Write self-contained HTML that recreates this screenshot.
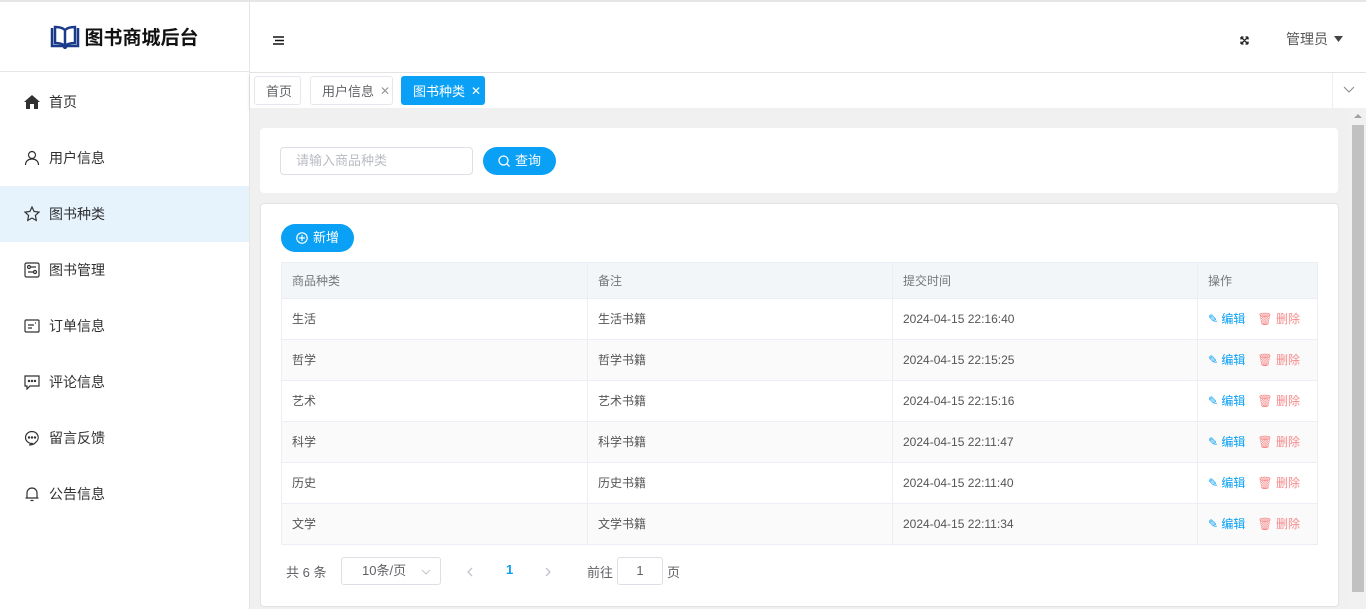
<!DOCTYPE html>
<html><head><meta charset="utf-8"><style>
*{box-sizing:border-box;margin:0;padding:0}
body{width:1366px;height:609px;overflow:hidden;background:#fff;font-family:"Liberation Sans","Noto Sans CJK SC",sans-serif;font-size:13px;color:#333;position:relative}
.a{position:absolute;white-space:nowrap}
.topline{left:0;top:0;width:1366px;height:2px;background:#e6e6e6}
.side{left:0;top:2px;width:250px;height:607px;border-right:1px solid #e6e6e6;background:#fff}
.logo{left:0;top:2px;width:249px;height:70px;border-bottom:1px solid #e6e6e6;display:flex;align-items:center;justify-content:center;font-size:19px;font-weight:bold;color:#111}
.menu{left:0;width:249px;height:56px;display:flex;align-items:center;padding-left:24px;font-size:14px;color:#303133}
.menu svg{margin-right:9px}
.menu.on{background:#e6f3fd}
.header{left:250px;top:2px;width:1116px;height:71px;border-bottom:1px solid #e6e6e6}
.tabs{left:250px;top:73px;width:1116px;height:35px;background:#fff;box-shadow:0 2px 4px rgba(0,0,0,.12)}
.tab{top:76px;height:29px;border:1px solid #e4e7ed;border-radius:3px;font-size:13px;color:#606266;display:flex;align-items:center;padding:0 11px;background:#fff}
.tab.on{background:#0aa0f5;color:#fff;border-color:#0aa0f5}
.tab span{font-size:12px;margin-left:6px}
.main{left:250px;top:108px;width:1100px;height:501px;background:#f0f0f0}
.card{background:#fff;border-radius:4px}
.btn{background:#0aa0f5;color:#fff;border-radius:14px;height:28px;display:flex;align-items:center;justify-content:center;font-size:13px;line-height:28px}
table{border-collapse:collapse;position:absolute;left:281px;top:262px;width:1037px;font-size:12px;color:#555}
td,th{border:1px solid #ebeef5;height:41px;padding:0 0 0 10px;text-align:left;font-weight:normal;line-height:16px}
th{height:36px;background:#f3f6f9;color:#777}
tr:nth-child(odd) td{background:#fafafa}
.ed{color:#0aa0f5}.dl{color:#f78989;margin-left:12px}
.ed svg,.dl svg{vertical-align:-2px;margin-right:4px}
</style></head><body>
<div class="a topline"></div>
<div class="a side"></div>
<div class="a logo"><svg width="30" height="24" viewBox="0 0 30 24" style="margin-right:4px"><path d="M2 3v18h11l2 2 2-2h11V3" fill="none" stroke="#1a3a8a" stroke-width="2.5"/><path d="M5 2c4 0 8 1 10 3v16c-2-2-6-3-10-3zM25 2c-4 0-8 1-10 3v16c2-2 6-3 10-3z" fill="none" stroke="#1a3a8a" stroke-width="2.5"/></svg>图书商城后台</div>
<div class="a menu" style="top:74px"><svg width="16" height="14" viewBox="0 0 16 14"><path d="M8 0L0 7h2v7h4V9h4v5h4V7h2z" fill="#303133"/></svg>首页</div>
<div class="a menu" style="top:130px"><svg width="16" height="16" viewBox="0 0 16 16" fill="none" stroke="#303133" stroke-width="1.2"><circle cx="8" cy="5" r="3.5"/><path d="M1.5 15c0-4 3-6 6.5-6s6.5 2 6.5 6"/></svg>用户信息</div>
<div class="a menu on" style="top:186px"><svg width="16" height="16" viewBox="0 0 16 16" fill="none" stroke="#303133" stroke-width="1.2"><path d="M8 1l2.1 4.5 4.9.6-3.6 3.4.9 4.9L8 12l-4.3 2.4.9-4.9L1 6.1l4.9-.6z"/></svg>图书种类</div>
<div class="a menu" style="top:242px"><svg width="16" height="16" viewBox="0 0 16 16" fill="none" stroke="#303133" stroke-width="1.2"><rect x="1" y="1" width="14" height="14" rx="1.5"/><circle cx="5" cy="5" r="1.5"/><circle cx="11" cy="10" r="1.5"/><path d="M7 5h5M4 10h5"/></svg>图书管理</div>
<div class="a menu" style="top:298px"><svg width="16" height="16" viewBox="0 0 16 16" fill="none" stroke="#303133" stroke-width="1.2"><rect x="1" y="2" width="14" height="12" rx="1"/><path d="M4 7h6M4 10h4M11 5h1"/></svg>订单信息</div>
<div class="a menu" style="top:354px"><svg width="16" height="16" viewBox="0 0 16 16" fill="none" stroke="#303133" stroke-width="1.2"><path d="M1 2h14v10H6l-3 3v-3H1z"/><circle cx="5" cy="7" r=".6" fill="#303133"/><circle cx="8" cy="7" r=".6" fill="#303133"/><circle cx="11" cy="7" r=".6" fill="#303133"/></svg>评论信息</div>
<div class="a menu" style="top:410px"><svg width="16" height="16" viewBox="0 0 16 16" fill="none" stroke="#303133" stroke-width="1.2"><path d="M8 1.5a6.5 6 0 1 0 0 12c-1 1-2 1.5-3 1.5 3 0 5.5-1 7-3A6.5 6 0 0 0 8 1.5z"/><circle cx="5" cy="7.5" r=".6" fill="#303133"/><circle cx="8" cy="7.5" r=".6" fill="#303133"/><circle cx="11" cy="7.5" r=".6" fill="#303133"/></svg>留言反馈</div>
<div class="a menu" style="top:466px"><svg width="16" height="16" viewBox="0 0 16 16" fill="none" stroke="#303133" stroke-width="1.2"><path d="M3 12V7a5 5 0 0 1 10 0v5h1.5M1.5 12H14M6.5 14.5h3"/></svg>公告信息</div>

<div class="a header"></div>
<div class="a" style="left:273px;top:33px"><svg width="11" height="9" viewBox="0 0 11 9"><path d="M0 1h11M2 4.5h9M0 8h11" stroke="#111" stroke-width="1.4"/></svg></div>
<div class="a" style="left:1240px;top:33px"><svg width="9" height="9" viewBox="0 0 9 9" stroke="#222" stroke-width="1.3" fill="none"><path d="M1 1l7 7M8 1L1 8M1 1h2.5M1 1v2.5M8 1H5.5M8 1v2.5M1 8h2.5M1 8V5.5M8 8H5.5M8 8V5.5"/></svg></div>
<div class="a" style="left:1286px;top:29px;font-size:14px;color:#555">管理员 <svg width="9" height="6" viewBox="0 0 9 6" style="vertical-align:2px;margin-left:2px"><path d="M0 0h9L4.5 6z" fill="#444"/></svg></div>

<div class="a tabs"></div>
<div class="a" style="left:1332px;top:73px;width:34px;height:35px;border-left:1px solid #eee;background:#fff"><svg style="position:absolute;left:10px;top:13px" width="12" height="8" viewBox="0 0 12 8"><path d="M1 1l5 5 5-5" fill="none" stroke="#888" stroke-width="1"/></svg></div>
<div class="a tab" style="left:254px;width:47px">首页</div>
<div class="a tab" style="left:310px;width:83px">用户信息<span style="color:#999">✕</span></div>
<div class="a tab on" style="left:401px;width:84px">图书种类<span>✕</span></div>

<div class="a main"></div>
<div class="a" style="left:1350px;top:108px;width:16px;height:501px;background:#f1f1f1"><div style="position:absolute;left:2px;top:17px;width:12px;height:467px;background:#c1c1c1"></div><div style="position:absolute;left:4px;top:6px;border:4px solid transparent;border-bottom:4px solid #a3a3a3;border-top:0"></div></div>
<div class="a card" style="left:260px;top:128px;width:1078px;height:65px"></div>
<div class="a" style="left:280px;top:147px;width:193px;height:28px;border:1px solid #dcdfe6;border-radius:4px;font-size:13px;color:#b8bcc3;padding-left:15px;line-height:26px">请输入商品种类</div>
<div class="a btn" style="left:483px;top:147px;width:73px"><svg width="12" height="12" viewBox="0 0 12 12" fill="none" stroke="#fff" stroke-width="1.3" style="margin-right:5px"><circle cx="5.5" cy="5.5" r="4.5"/><path d="M9 9l2.5 2.5"/></svg>查询</div>
<div class="a card" style="left:260px;top:203px;width:1079px;height:404px;border:1px solid #e4e4e4"></div>
<div class="a btn" style="left:281px;top:224px;width:73px"><svg width="12" height="12" viewBox="0 0 12 12" fill="none" stroke="#fff" stroke-width="1.2" style="margin-right:5px"><circle cx="6" cy="6" r="5.2"/><path d="M6 3v6M3 6h6"/></svg>新增</div>
<table>
<tr><th style="width:306px">商品种类</th><th style="width:305px">备注</th><th style="width:305px">提交时间</th><th>操作</th></tr>
<tr><td>生活</td><td>生活书籍</td><td>2024-04-15 22:16:40</td><td><span class="ed">✎ 编辑</span><span class="dl">🗑 删除</span></td></tr>
<tr><td>哲学</td><td>哲学书籍</td><td>2024-04-15 22:15:25</td><td><span class="ed">✎ 编辑</span><span class="dl">🗑 删除</span></td></tr>
<tr><td>艺术</td><td>艺术书籍</td><td>2024-04-15 22:15:16</td><td><span class="ed">✎ 编辑</span><span class="dl">🗑 删除</span></td></tr>
<tr><td>科学</td><td>科学书籍</td><td>2024-04-15 22:11:47</td><td><span class="ed">✎ 编辑</span><span class="dl">🗑 删除</span></td></tr>
<tr><td>历史</td><td>历史书籍</td><td>2024-04-15 22:11:40</td><td><span class="ed">✎ 编辑</span><span class="dl">🗑 删除</span></td></tr>
<tr><td>文学</td><td>文学书籍</td><td>2024-04-15 22:11:34</td><td><span class="ed">✎ 编辑</span><span class="dl">🗑 删除</span></td></tr>
</table>
<div class="a" style="left:286px;top:562px;font-size:13px;color:#606266">共 6 条</div>
<div class="a" style="left:341px;top:557px;width:100px;height:28px;border:1px solid #dcdfe6;border-radius:3px;font-size:13px;color:#606266;padding-left:20px;line-height:26px">10条/页<svg style="position:absolute;right:9px;top:11px" width="10" height="6" viewBox="0 0 10 6"><path d="M1 1l4 4 4-4" fill="none" stroke="#c0c4cc"/></svg></div>
<div class="a" style="left:467px;top:565px"><svg width="6" height="10" viewBox="0 0 6 10"><path d="M5 1L1 5l4 4" fill="none" stroke="#c0c4cc" stroke-width="1.3"/></svg></div>
<div class="a" style="left:506px;top:562px;color:#0aa0f5;font-weight:bold">1</div>
<div class="a" style="left:545px;top:565px"><svg width="6" height="10" viewBox="0 0 6 10"><path d="M1 1l4 4-4 4" fill="none" stroke="#c0c4cc" stroke-width="1.3"/></svg></div>
<div class="a" style="left:587px;top:562px;color:#606266">前往</div>
<div class="a" style="left:617px;top:557px;width:46px;height:28px;border:1px solid #dcdfe6;border-radius:3px;text-align:center;line-height:26px;color:#606266">1</div>
<div class="a" style="left:667px;top:562px;color:#606266">页</div>
</body></html>
